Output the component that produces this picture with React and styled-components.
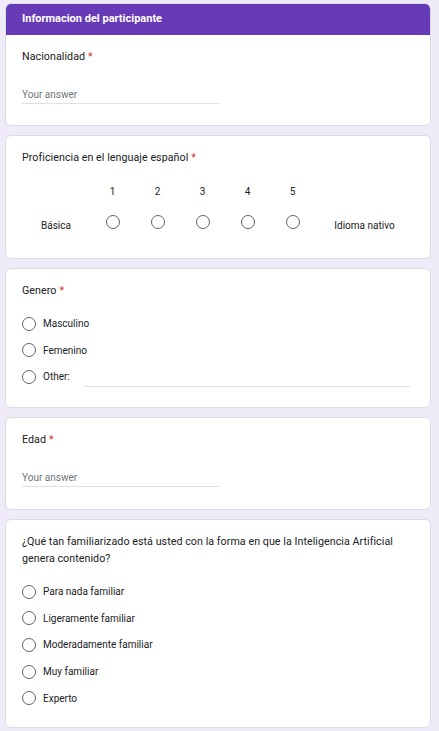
import styled, { createGlobalStyle } from 'styled-components';

const GlobalStyle = createGlobalStyle`
  html, body {
    margin: 0;
    padding: 0;
    background: #f0ebf8;
  }
  body {
    font-family: Roboto, 'Noto Sans', Arial, sans-serif;
    color: #202124;
  }
`;

const Page = styled.div`
  display: flex;
  flex-direction: column;
  gap: 9px;
  width: 426px;
  padding: 3px 0 4px 5px;
`;

const Card = styled.section`
  box-sizing: border-box;
  background: #fff;
  border: 1px solid #dadce0;
  border-radius: 6px;
  overflow: hidden;
  padding-bottom: ${(p) => p.$bottom || 15}px;
`;

const Header = styled.div`
  height: 32px;
  margin: -1px -1px 0;
  background: #673ab7;
  color: #fff;
  font-size: 11px;
  font-weight: 700;
  line-height: 32px;
  padding-left: 17px;
`;

const Body = styled.div`
  padding: ${(p) => p.$top || 14}px 16px 0;
`;

const Title = styled.div`
  font-size: 10.7px;
  line-height: 16.67px;
  letter-spacing: 0.05px;
  color: #202124;
`;

const Star = styled.span`
  color: #d93025;
  margin-left: 3px;
`;

const TextInput = styled.div`
  width: 197px;
  margin-top: 22px;
  font-size: 10px;
  line-height: 14px;
  color: #70757a;
  padding-bottom: 1px;
  border-bottom: 1px solid #e0e0e0;
`;

const Options = styled.div`
  display: flex;
  flex-direction: column;
  margin-top: 11px;
`;

const OptionRow = styled.label`
  display: flex;
  align-items: center;
  height: 26.67px;
  font-size: 10px;
  color: #202124;
`;

const Radio = styled.span`
  box-sizing: border-box;
  flex: none;
  width: 14px;
  height: 14px;
  border: 1.5px solid #5f6368;
  border-radius: 50%;
  margin-right: ${(p) => (p.$inline ? 0 : 7)}px;
`;

const OtherLine = styled.span`
  flex: 1;
  height: 14px;
  margin: 0 4px 0 14px;
  border-bottom: 1px solid #e0e0e0;
  transform: translateY(3px);
`;

const Scale = styled.div`
  display: grid;
  grid-template-columns: 68px repeat(5, 45px) 1fr;
  grid-template-rows: 14px 18px;
  row-gap: 16px;
  margin-top: 18px;
  font-size: 10px;
  color: #202124;
  text-align: center;
`;

const ScaleNum = styled.span`
  grid-row: 1;
  line-height: 14px;
`;

const ScaleCell = styled.span`
  grid-row: 2;
  display: flex;
  justify-content: center;
  align-items: flex-start;
`;

const ScaleLabel = styled.span`
  grid-row: 2;
  align-self: end;
  line-height: 14px;
`;

const Required = ({ children }) => (
  <Title>
    {children}
    <Star>*</Star>
  </Title>
);

const Choices = ({ items }) => (
  <Options>
    {items.map((item) => (
      <OptionRow key={item}>
        <Radio />
        {item}
      </OptionRow>
    ))}
  </Options>
);

const App = () => {
  const levels = [1, 2, 3, 4, 5];
  return (
    <>
      <GlobalStyle />
      <Page>
        <Card $bottom={21}>
          <Header>Informacion del participante</Header>
          <Body $top={14.33}>
            <Required>Nacionalidad</Required>
            <TextInput>Your answer</TextInput>
          </Body>
        </Card>

        <Card $bottom={25}>
          <Body>
            <Required>Proficiencia en el lenguaje español</Required>
            <Scale>
              {levels.map((n, i) => (
                <ScaleNum key={n} style={{ gridColumn: i + 2 }}>
                  {n}
                </ScaleNum>
              ))}
              <ScaleLabel style={{ gridColumn: 1 }}>Básica</ScaleLabel>
              {levels.map((n, i) => (
                <ScaleCell key={n} style={{ gridColumn: i + 2 }}>
                  <Radio $inline />
                </ScaleCell>
              ))}
              <ScaleLabel style={{ gridColumn: 7 }}>Idioma nativo</ScaleLabel>
            </Scale>
          </Body>
        </Card>

        <Card $bottom={17}>
          <Body>
            <Required>Genero</Required>
            <Options>
              <OptionRow>
                <Radio />
                Masculino
              </OptionRow>
              <OptionRow>
                <Radio />
                Femenino
              </OptionRow>
              <OptionRow>
                <Radio />
                Other:
                <OtherLine />
              </OptionRow>
            </Options>
          </Body>
        </Card>

        <Card $bottom={22}>
          <Body>
            <Required>Edad</Required>
            <TextInput>Your answer</TextInput>
          </Body>
        </Card>

        <Card>
          <Body>
            <Title>
              ¿Qué tan familiarizado está usted con la forma en que la Inteligencia Artificial genera contenido?
            </Title>
            <Choices
              items={[
                'Para nada familiar',
                'Ligeramente familiar',
                'Moderadamente familiar',
                'Muy familiar',
                'Experto',
              ]}
            />
          </Body>
        </Card>
      </Page>
    </>
  );
};

export default App;
